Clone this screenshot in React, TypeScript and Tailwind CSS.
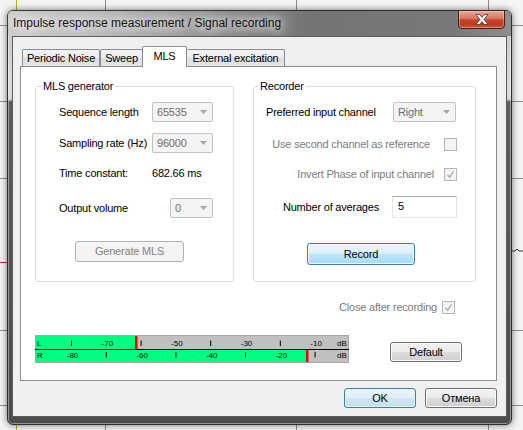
import React from "react";

const ui = "font-['Liberation_Sans','Arial',sans-serif]";

const btnBase = "flex items-center justify-center rounded-[3px] border leading-none";
const btnNormal =
  "border-[#707070] text-black bg-[linear-gradient(#f2f2f2,#ebebeb_50%,#dddddd_50%,#cfcfcf)] shadow-[inset_0_0_0_1px_#fbfbfb]";
const btnDefault =
  "border-[#3c7fb1] text-black bg-[linear-gradient(#ebf5fb,#e0eff9_50%,#cfe7f6_50%,#c0dff2)] shadow-[inset_0_0_0_1px_#e2f3fc]";
const btnHot =
  "border-[#3c7fb1] text-black bg-[linear-gradient(#eaf6fd,#d9f0fc_50%,#bee6fd_50%,#a7d9f5)] shadow-[inset_0_0_0_1px_#f0f9fe]";
const btnDisabled = "border-[#adb2b5] bg-[#f4f4f4] text-[#838383]";

function Arrow() {
  return (
    <svg width="7" height="4" viewBox="0 0 7 4">
      <path d="M0 0h7L3.5 4z" fill="#a6a6a6" />
    </svg>
  );
}

function Combo({ value, className }: { value: string; className: string }) {
  return (
    <div
      className={`${className} flex h-[20px] items-center justify-between rounded-[2px] border border-[#c3c3c3] bg-[#f4f4f4] pl-[4px] pr-[5px] text-[#6d6d6d]`}
    >
      <span>{value}</span>
      <Arrow />
    </div>
  );
}

function Check({ checked }: { checked?: boolean }) {
  return (
    <div className="flex h-[13px] w-[13px] shrink-0 items-center justify-center border border-[#b5b5b5] bg-[#f4f4f4]">
      {checked && (
        <svg width="9" height="9" viewBox="0 0 9 9">
          <path d="M1.5 4.8 3.6 7.2 7.6 1.4" fill="none" stroke="#ababab" strokeWidth="1.4" />
        </svg>
      )}
    </div>
  );
}

function CloseButton() {
  return (
    <div className="-mt-px flex h-[19px] w-[47px] items-center justify-center rounded-b-[4px] border border-[#4a1d14] bg-[linear-gradient(#e9a797,#d8735f_45%,#c5452b_52%,#c03a20_80%,#d2612f)] shadow-[inset_0_0_0_1px_rgba(255,255,255,0.3)]">
      <svg width="14" height="11" viewBox="0 0 14 11">
        <path
          d="M1 0.5H4.6L7 3.4L9.4 0.5H13L9 5.5L13 10.5H9.4L7 7.6L4.6 10.5H1L5 5.5Z"
          fill="#fff"
          stroke="#454545"
          strokeWidth="0.9"
          strokeLinejoin="round"
        />
      </svg>
    </div>
  );
}

// Two-channel peak meter, 10 dB per ~35 px
function LevelMeter() {
  const x = (db: number) => 37.5 + (db + 80) * 3.48;
  const topLabels = [-70, -50, -30, -10];
  const topTicks = [-80, -60, -40, -20];
  const bottomLabels = [-80, -60, -40, -20];
  const bottomTicks = [-70, -50, -30, -10];
  const txt = { fontFamily: "'Liberation Sans', Arial, sans-serif", fontSize: 8, letterSpacing: 0 };
  return (
    <svg width="314" height="28" viewBox="0 0 314 28" className="block">
      <rect x="0" y="0" width="314" height="28" fill="#c0c0c0" />
      <rect x="0.5" y="0.5" width="313" height="27" fill="none" stroke="#a5a5a5" />
      <rect x="1" y="1" width="99" height="13" fill="#00ff80" />
      <rect x="100" y="1" width="2.5" height="13" fill="#f00000" />
      <rect x="0" y="14" width="314" height="1" fill="#000" />
      <rect x="1" y="15" width="270" height="12" fill="#00ff80" />
      <rect x="271" y="15" width="2.5" height="12" fill="#f00000" />
      <text x="2" y="10.5" style={txt}>L</text>
      <text x="2" y="23.3" style={txt}>R</text>
      {topLabels.map((d) => (
        <text key={d} x={x(d)} y="10.5" textAnchor="middle" style={txt}>{d}</text>
      ))}
      {bottomLabels.map((d) => (
        <text key={d} x={x(d)} y="23.3" textAnchor="middle" style={txt}>{d}</text>
      ))}
      {topTicks.map((d) => (
        <rect key={d} x={x(d) - 1.5} y="5.5" width="1" height="5.5" fill="#000" />
      ))}
      {bottomTicks.map((d) => (
        <rect key={d} x={x(d) - 1.5} y="17" width="1" height="5.5" fill="#000" />
      ))}
      <text x="302" y="10.5" style={txt}>dB</text>
      <text x="302" y="23.3" style={txt}>dB</text>
    </svg>
  );
}

function Backdrop() {
  return (
    <svg className="absolute inset-0" width="523" height="430" viewBox="0 0 523 430">
      <g stroke="#8c8c8c" strokeWidth="1">
        <line x1="105.5" y1="0" x2="105.5" y2="430" />
        <line x1="296.5" y1="0" x2="296.5" y2="430" />
        <line x1="488.5" y1="0" x2="488.5" y2="430" />
        <line x1="0" y1="25.5" x2="523" y2="25.5" />
        <line x1="0" y1="101.5" x2="523" y2="101.5" />
        <line x1="0" y1="178.5" x2="523" y2="178.5" />
        <line x1="0" y1="330.5" x2="523" y2="330.5" />
        <line x1="0" y1="405.5" x2="523" y2="405.5" />
      </g>
      <line x1="16.5" y1="0" x2="16.5" y2="430" stroke="#b9b300" />
      <line x1="0" y1="262.5" x2="12" y2="262.5" stroke="#d02020" />
      <polyline points="512,251 515,251 517,249 519,251 523,251" fill="none" stroke="#333" />
    </svg>
  );
}

export default function App() {
  return (
    <div className={`relative h-[430px] w-[523px] overflow-hidden bg-[#f4f4f4] ${ui}`}>
      <Backdrop />
      <div className="relative pl-[7px] pt-[10px]">
        {/* window frame */}
        <div className="flex h-[415px] w-[505px] flex-col rounded-[6px] border border-[#2e2e2e] bg-[linear-gradient(#c3c3c3,#dcdcdc_80px,#d4d4d4_88px,#5e5e5e_91px,#4c4c4c)] px-[4px] pb-[7px] shadow-[0_0_7px_rgba(0,0,0,0.55),inset_0_0_0_1px_rgba(255,255,255,0.4)]">
          <div className="-mx-[4px] flex h-[25px] items-start justify-between rounded-t-[5px] bg-[linear-gradient(90deg,#cdcdcd,#b8b8b8_18%,#8e8e8e_42%,#747474_60%,#787878_88%,#8f8f8f)] pl-[5px] pr-[6px]">
            <span className="mt-[5px] text-[12px] leading-[15px] text-[#111] [text-shadow:0_0_8px_#fff,0_0_12px_#fff,0_0_18px_rgba(255,255,255,0.9)]">
              Impulse response measurement / Signal recording
            </span>
            <CloseButton />
          </div>

          {/* client area */}
          <div className="flex-1 border border-[#5c5c5c] bg-[#f0f0f0] pl-[7px] pr-[9px] pt-[9px] text-[11px] tracking-[-0.2px] text-black">
            <div className="relative z-10 flex h-[20px] items-end pl-[2px]">
              <div className="flex h-[17px] w-[78px] items-center justify-center rounded-t-[2px] border border-b-0 border-[#898c95] bg-[linear-gradient(#f3f3f3,#ebebeb_50%,#dedede_50%,#e4e4e4)]">
                Periodic Noise
              </div>
              <div className="flex h-[17px] w-[43px] items-center justify-center rounded-t-[2px] border border-b-0 border-[#898c95] bg-[linear-gradient(#f3f3f3,#ebebeb_50%,#dedede_50%,#e4e4e4)]">
                Sweep
              </div>
              <div className="-mb-px -ml-px flex h-[21px] w-[45px] items-start justify-center rounded-t-[2px] border border-b-0 border-[#898c95] bg-white pt-[2px] leading-[14px]">
                MLS
              </div>
              <div className="flex h-[17px] w-[98px] items-center justify-center rounded-t-[2px] border border-b-0 border-l-0 border-[#898c95] bg-[linear-gradient(#f3f3f3,#ebebeb_50%,#dedede_50%,#e4e4e4)]">
                External excitation
              </div>
            </div>

            {/* tab page */}
            <div className="h-[315px] border border-[#898c95] bg-white">
              <div className="mt-[12px] flex gap-[19px] pl-[14px]">
                <fieldset className="h-[203px] w-[199px] rounded-[3px] border border-[#d5dfe5]">
                  <legend className="ml-[5px] px-[2px] leading-[14px]">MLS generator</legend>
                  <div className="mt-[9px] flex items-center justify-between pl-[23px] pr-[20px]">
                    <span>Sequence length</span>
                    <Combo value="65535" className="w-[61px]" />
                  </div>
                  <div className="mt-[11px] flex items-center justify-between pl-[23px] pr-[20px]">
                    <span>Sampling rate (Hz)</span>
                    <Combo value="96000" className="w-[61px]" />
                  </div>
                  <div className="mt-[10px] flex h-[20px] items-center justify-between pl-[23px] pr-[20px]">
                    <span>Time constant:</span>
                    <span className="w-[61px]">682.66 ms</span>
                  </div>
                  <div className="mt-[15px] flex items-center justify-between pl-[23px] pr-[20px]">
                    <span>Output volume</span>
                    <Combo value="0" className="w-[43px]" />
                  </div>
                  <div className={`${btnBase} ${btnDisabled} ml-[39px] mt-[23px] h-[21px] w-[109px]`}>
                    Generate MLS
                  </div>
                </fieldset>

                <fieldset className="h-[203px] w-[223px] rounded-[3px] border border-[#d5dfe5]">
                  <legend className="ml-[4px] px-[2px] leading-[14px]">Recorder</legend>
                  <div className="mt-[9px] flex items-center justify-between pl-[12px] pr-[19px]">
                    <span>Preferred input channel</span>
                    <Combo value="Right" className="w-[63px]" />
                  </div>
                  <div className="mt-[16px] flex h-[13px] items-center justify-end gap-[14px] pr-[18px] text-[#7b7b7b]">
                    <span>Use second channel as reference</span>
                    <Check />
                  </div>
                  <div className="mt-[17px] flex h-[13px] items-center justify-end gap-[10px] pr-[18px] text-[#7b7b7b]">
                    <span>Invert Phase of input channel</span>
                    <Check checked />
                  </div>
                  <div className="mt-[15px] flex items-center justify-end gap-[13px] pr-[18px]">
                    <span>Number of averages</span>
                    <div className="h-[22px] w-[65px] border border-[#abadb3] border-b-[#e3e9ef] border-l-[#e2e3ea] border-r-[#dbdfe6] bg-white pl-[5px] pt-[2px] leading-[14px]">
                      5
                    </div>
                  </div>
                  <div className={`${btnBase} ${btnHot} ml-[53px] mt-[25px] h-[22px] w-[108px]`}>Record</div>
                </fieldset>
              </div>

              <div className="mt-[19px] flex h-[13px] items-center justify-end gap-[5px] pr-[41px] text-[#7b7b7b]">
                <span>Close after recording</span>
                <Check checked />
              </div>

              <div className="mt-[21px] flex items-start pl-[14px]">
                <LevelMeter />
                <div className={`${btnBase} ${btnNormal} ml-[41px] mt-[7px] h-[20px] w-[72px]`}>Default</div>
              </div>
            </div>

            <div className="mt-[7px] flex justify-end gap-[9px]">
              <div className={`${btnBase} ${btnDefault} h-[20px] w-[72px]`}>OK</div>
              <div className={`${btnBase} ${btnNormal} h-[20px] w-[72px]`}>Отмена</div>
            </div>
          </div>
        </div>
      </div>
    </div>
  );
}
